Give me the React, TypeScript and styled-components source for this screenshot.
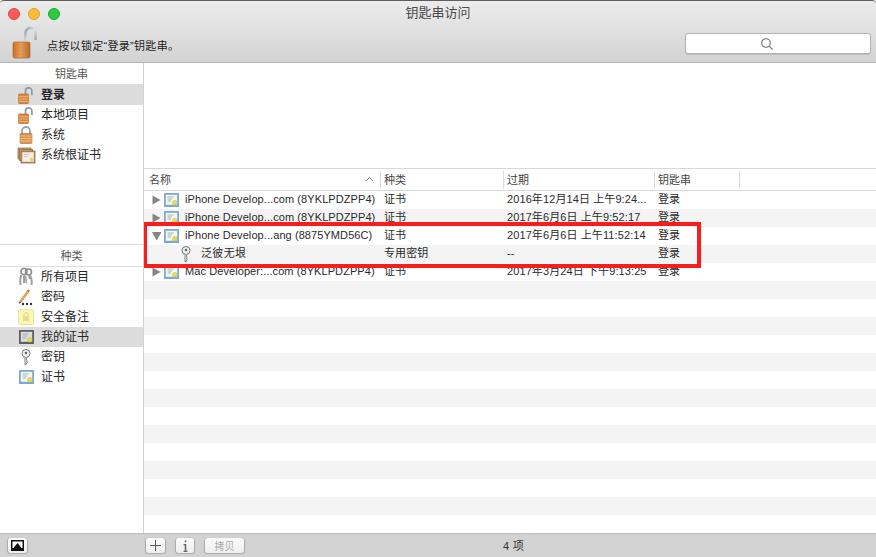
import React from "react";
import styled, { createGlobalStyle } from "styled-components";

const Global = createGlobalStyle`
  html, body { margin: 0; padding: 0; background: #fff; overflow: hidden; }
  body { font-family: "Liberation Sans", "Noto Sans CJK SC", sans-serif; }
  * { box-sizing: border-box; }
`;

const FONT = `"Liberation Sans", "Noto Sans CJK SC", sans-serif`;

const Window = styled.div`
  width: 876px; height: 557px; display: flex; flex-direction: column;
  position: relative; background: #fff; overflow: hidden; color: #222;
`;
const Chrome = styled.header`
  height: 63px; flex: none; display: flex; flex-direction: column;
  border-top: 1px solid #5e5e5e; border-bottom: 1px solid #b4b4b4;
  border-radius: 4px 4px 0 0;
  background: linear-gradient(#ececec, #d3d3d3);
`;
const TitleBar = styled.div`
  height: 25px; flex: none; display: flex; align-items: center; padding-left: 8px; gap: 8px; position: relative;
`;
const Light = styled.span<{ $c: string; $b: string }>`
  width: 12px; height: 12px; border-radius: 50%; background: ${p => p.$c}; border: 0.5px solid ${p => p.$b};
`;
const Title = styled.div`
  position: absolute; left: 0; right: 0; top: 3px; text-align: center; font-size: 13px; line-height: 18px; color: #4a4a4a;
`;
const ToolRow = styled.div`
  flex: 1; display: flex; align-items: flex-start; padding: 0 5px 0 8px; position: relative;
`;
const LockSlot = styled.div` width: 30px; height: 36px; flex: none; margin-top: -2px; `;
const Hint = styled.div`
  font-size: 11px; line-height: 14px; color: #1a1a1a; margin: 13px 0 0 9px; flex: 1; letter-spacing: 0.3px;
`;
const Search = styled.div`
  width: 186px; height: 21px; margin-top: 7px; background: #fff; border: 1px solid #b2b2b2; border-radius: 3px;
  display: flex; align-items: center; justify-content: center; padding-right: 22px;
  box-shadow: 0 1px 0 #bdbdbd;
`;
const Body = styled.div` flex: 1; display: flex; min-height: 0; `;
const Sidebar = styled.aside`
  width: 144px; flex: none; border-right: 1px solid #d2d2d2; display: flex; flex-direction: column;
`;
const Section = styled.section<{ $h: number }>`
  height: ${p => p.$h}px; flex: none; display: flex; flex-direction: column;
`;
const SideHead = styled.div<{ $line?: boolean }>`
  height: ${p => p.$line ? 23 : 22}px; flex: none; display: flex; align-items: center; justify-content: center;
  padding-bottom: 2px;
  font-size: 11px; color: #555; border-bottom: 1px solid #dcdcdc; ${p => p.$line ? "border-top: 1px solid #dcdcdc;" : ""}
`;
const SideRow = styled.div<{ $sel?: boolean }>`
  height: 20px; flex: none; display: flex; align-items: center; padding-left: 16px; gap: 5px;
  background: ${p => p.$sel ? "#dcdcdc" : "transparent"};
  color: #262626;
`;
const SideLabel = styled.span<{ $bold?: boolean }>`
  font-size: 12px; line-height: 16px; margin-bottom: 1px; font-weight: ${p => p.$bold ? 700 : 400};
`;
const IconBox = styled.span`
  width: 20px; height: 20px; flex: none; display: flex; align-items: center; justify-content: center;
`;
const Main = styled.main` flex: 1; display: flex; flex-direction: column; position: relative; min-width: 0; `;
const Blank = styled.div` height: 106px; flex: none; border-bottom: 1px solid #d8d8d8; `;
const ColumnGrid = styled.div`
  display: grid; grid-template-columns: 237px 123px 151px 85px 1fr;
`;
const HeadRow = styled(ColumnGrid)`
  height: 22px; flex: none; border-bottom: 1px solid #d8d8d8; align-items: stretch;
`;
const HeadCell = styled.div<{ $pad: number }>`
  position: relative; display: flex; align-items: center; justify-content: space-between;
  padding: 0 6px 2px ${p => p.$pad}px; font-size: 11px; color: #444; margin: 2px 0;
  &:not(:last-child) { border-right: 1px solid #dcdcdc; }
`;
const Rows = styled.div` flex: 1; overflow: hidden; `;
const Row = styled(ColumnGrid)`
  height: 18px; font-size: 11px; line-height: 16px; color: #2a2a2a;
  &:nth-child(even) { background: #f4f4f4; }
`;
const NameCell = styled.div<{ $child?: boolean }>`
  display: flex; align-items: center; padding-left: ${p => p.$child ? 36 : 8}px; min-width: 0; white-space: nowrap;
`;
const Twisty = styled.span` width: 12px; height: 18px; flex: none; display: flex; align-items: center; `;
const NameIcon = styled.span`
  width: 21px; flex: none; display: flex; align-items: center; height: 18px;
`;
const NameText = styled.span<{ $spaced?: boolean }>`
  margin-bottom: 2px;
  letter-spacing: ${p => p.$spaced ? "0.03em" : "0.08px"};
`;
const Cell = styled.div` padding-left: 3px; white-space: nowrap; overflow: hidden; letter-spacing: 0.1px; `;
const Highlight = styled.div`
  position: absolute; left: 0; top: 159px; width: 557px; height: 46px;
  border: 4.5px solid #fb1c1c; border-left-width: 3.5px; pointer-events: none;
`;
const Footer = styled.footer`
  height: 24px; flex: none; display: flex; align-items: center; background: #d2d2d2; border-top: 1px solid #bcbcbc;
`;
const FootLeft = styled.div` width: 144px; flex: none; padding-left: 8px; display: flex; align-items: center; `;
const FootMain = styled.div` flex: 1; display: grid; grid-template-columns: 1fr auto 1fr; align-items: center; `;
const FootButtons = styled.div` display: flex; gap: 11px; padding-left: 2px; align-items: center; `;
const FootButton = styled.button<{ $w: number; $off?: boolean }>`
  width: ${p => p.$w}px; height: 15px; padding: 0; border: 0; border-radius: 3px; background: linear-gradient(#fbfbfb, #eeeeee);
  box-shadow: 0 0.5px 1px 0.5px #a8a8a8; display: flex; align-items: center; justify-content: center;
  font: 10px ${FONT}; color: ${p => p.$off ? "#a8a8a8" : "#333"};
`;
const Count = styled.div` font-size: 11px; color: #333; padding: 0 0 2px 7px; letter-spacing: 0.03em; `;

const BigLock = () => (
  <svg width="30" height="36" viewBox="0 0 30 36">
    <defs>
      <linearGradient id="bigBody" x1="0" x2="1" y1="0" y2="0">
        <stop offset="0" stopColor="#c8702a" /><stop offset=".45" stopColor="#e8a25c" /><stop offset="1" stopColor="#b9692a" />
      </linearGradient>
      <linearGradient id="shk" x1="0" x2="1" y1="0" y2="1">
        <stop offset="0" stopColor="#8f9aa3" /><stop offset=".5" stopColor="#dfe4e8" /><stop offset="1" stopColor="#8d98a1" />
      </linearGradient>
    </defs>
    <path d="M17.5 19V9.5a5 5.5 0 0 1 10 0V15" fill="none" stroke="url(#shk)" strokeWidth="2.6" strokeLinecap="round" />
    <rect x="5" y="18" width="17" height="16" rx="1.5" fill="url(#bigBody)" stroke="#a8601f" strokeWidth=".6" />
    <path d="M5 21h17M5 24h17M5 27h17M5 30h17" stroke="#bf7430" strokeWidth=".5" opacity=".6" />
  </svg>
);

const SmallOpenLock = () => (
  <svg width="20" height="20" viewBox="0 0 20 20">
    <path d="M7.5 10V6a3.2 3.2 0 0 1 6.4 0V9.5" transform="translate(2 0)" fill="none" stroke="#8e99a3" strokeWidth="1.7" strokeLinecap="round" />
    <rect x="2.5" y="9" width="10" height="9.5" rx="1" fill="#d98a41" stroke="#a85f22" strokeWidth=".6" />
    <path d="M2.5 11.5h10M2.5 14h10M2.5 16.5h10" stroke="#f0b77c" strokeWidth=".8" />
  </svg>
);

const SmallClosedLock = () => (
  <svg width="20" height="20" viewBox="0 0 20 20">
    <path d="M6 9V6a4 4 0 0 1 8 0V9" fill="none" stroke="#98a1a9" strokeWidth="1.8" />
    <rect x="4" y="8.5" width="12" height="10" rx="1" fill="#dd9250" stroke="#b06a2c" strokeWidth=".6" />
    <path d="M4 11h12M4 13.5h12M4 16h12" stroke="#f2c08a" strokeWidth=".9" />
  </svg>
);

const CertStack = () => (
  <svg width="20" height="20" viewBox="0 0 20 20">
    <rect x="2" y="3" width="13" height="11" fill="#c9a071" stroke="#8d6238" strokeWidth=".7" />
    <rect x="3.5" y="4.5" width="13" height="11" fill="#d7b48a" stroke="#8d6238" strokeWidth=".7" />
    <rect x="5" y="6" width="14" height="12" fill="#c79a66" stroke="#7d5430" strokeWidth=".7" />
    <rect x="6.3" y="7.3" width="11.4" height="9.4" fill="#f6efe6" />
    <path d="M8 9.5h5M8 11.5h4" stroke="#c9b7b7" strokeWidth=".8" />
    <circle cx="15.5" cy="14.5" r="1.7" fill="#e3d25c" />
  </svg>
);

const KeyRing = () => (
  <svg width="20" height="20" viewBox="0 0 20 20" fill="none" stroke="#8d8d8d">
    <circle cx="8" cy="4.5" r="3" strokeWidth="1.6" />
    <circle cx="12.5" cy="5" r="3" strokeWidth="1.6" />
    <path d="M5.5 8C4 11 4 14 4.5 18M8 8.5V16M13 8l1 4M14 8.5c2 3 2 6 1.5 9.5" strokeWidth="2" stroke="#9d9d9d" />
    <path d="M9.5 8.5l1 8" strokeWidth="1.8" stroke="#a9a9a9" />
  </svg>
);

const Pencil = () => (
  <svg width="20" height="20" viewBox="0 0 20 20">
    <path d="M3.5 14.5L11.5 3.5l1.6 1.2L5 15.7z" fill="#e2b063" stroke="#a67b3a" strokeWidth=".5" />
    <path d="M11.3 3.7l1-1.3 1.6 1.2-.9 1.2z" fill="#d8433a" />
    <path d="M3.5 14.5l-.6 2.3 2.1-1.1z" fill="#333" />
    <circle cx="7" cy="17" r="1.2" fill="#333" /><circle cx="11" cy="17" r="1.2" fill="#333" /><circle cx="15" cy="17" r="1.2" fill="#333" />
  </svg>
);

const Note = () => (
  <svg width="20" height="20" viewBox="0 0 20 20">
    <rect x="2.5" y="2.5" width="15" height="15" rx="1" fill="#fdf7b4" stroke="#e9e2a5" />
    <path d="M8 9V7.5a2 2 0 0 1 4 0V9" fill="none" stroke="#e6dc8f" strokeWidth="1.2" />
    <rect x="7" y="9" width="6" height="5" fill="#e6dc8f" />
  </svg>
);

const Cert = ({ dark }: { dark?: boolean }) => (
  <svg width="15" height="14" viewBox="0 0 15 14">
    <rect x="0" y="0" width="15" height="14" rx=".5" fill={dark ? "#5f5f5f" : "#7ea9cf"} />
    <rect x="1.8" y="1.8" width="11.4" height="10" fill={dark ? "#dedede" : "#f4f6f3"} />
    <path d="M3.5 4h6M3.5 6h4.5M3.5 8h3.5" stroke="#9aa2a8" strokeWidth=".8" />
    <circle cx="10.8" cy="9.8" r="2.4" fill="#e4dc58" stroke="#bdb43a" strokeWidth=".4" />
  </svg>
);

const KeyIcon = () => (
  <svg width="12" height="17" viewBox="0 0 12 17" fill="none" stroke="#777">
    <circle cx="6" cy="4.5" r="4" fill="#f1f1f1" />
    <circle cx="6" cy="4" r="1.3" fill="#666" stroke="none" />
    <path d="M5 8.5v7.5l1.5-.8V14l1-.6-1-.8.8-.7-.8-.7V8.5" fill="#eee" strokeWidth=".9" />
  </svg>
);

const Tri = ({ open }: { open?: boolean }) => (
  <svg width="10" height="10" viewBox="0 0 10 10">
    <path d={open ? "M0 1h9.5L4.7 9.5z" : "M0.5 0.5L8.5 5 0.5 9.5z"} fill="#858585" />
  </svg>
);

const keychains = [
  { label: "登录", icon: <SmallOpenLock />, sel: true, bold: true },
  { label: "本地项目", icon: <SmallOpenLock /> },
  { label: "系统", icon: <SmallClosedLock /> },
  { label: "系统根证书", icon: <CertStack /> },
];
const categories = [
  { label: "所有项目", icon: <KeyRing /> },
  { label: "密码", icon: <Pencil /> },
  { label: "安全备注", icon: <Note /> },
  { label: "我的证书", icon: <Cert dark />, sel: true },
  { label: "密钥", icon: <KeyIcon /> },
  { label: "证书", icon: <Cert /> },
];
const rows = [
  { name: "iPhone Develop...com (8YKLPDZPP4)", kind: "证书", exp: "2016年12月14日 上午9:24...", chain: "登录" },
  { name: "iPhone Develop...com (8YKLPDZPP4)", kind: "证书", exp: "2017年6月6日 上午9:52:17", chain: "登录" },
  { name: "iPhone Develop...ang (8875YMD56C)", kind: "证书", exp: "2017年6月6日 上午11:52:14", chain: "登录", open: true },
  { name: "泛彼无垠", kind: "专用密钥", exp: "--", chain: "登录", child: true },
  { name: "Mac Developer:...com (8YKLPDZPP4)", kind: "证书", exp: "2017年3月24日 下午9:13:25", chain: "登录" },
];
const filler = Array.from({ length: 14 }, (_, i) => i);

export default function App() {
  return (
    <Window>
      <Global />
      <Chrome>
        <TitleBar>
          <Light $c="#fc5b57" $b="#e2463f" />
          <Light $c="#fdbb40" $b="#e1a116" />
          <Light $c="#2fc840" $b="#19ab29" />
          <Title>钥匙串访问</Title>
        </TitleBar>
        <ToolRow>
          <LockSlot><BigLock /></LockSlot>
          <Hint>点按以锁定“登录”钥匙串。</Hint>
          <Search>
            <svg width="14" height="14" viewBox="0 0 14 14" fill="none" stroke="#6e6e6e" strokeWidth="1.1">
              <circle cx="6" cy="6" r="4.3" /><path d="M9.2 9.2l3.4 3.4" />
            </svg>
          </Search>
        </ToolRow>
      </Chrome>
      <Body>
        <Sidebar>
          <Section $h={181}>
            <SideHead>钥匙串</SideHead>
            {keychains.map(k => (
              <SideRow key={k.label} $sel={k.sel}><IconBox>{k.icon}</IconBox><SideLabel $bold={k.bold}>{k.label}</SideLabel></SideRow>
            ))}
          </Section>
          <Section $h={280}>
            <SideHead $line>种类</SideHead>
            {categories.map(k => (
              <SideRow key={k.label} $sel={k.sel}><IconBox>{k.icon}</IconBox><SideLabel>{k.label}</SideLabel></SideRow>
            ))}
          </Section>
        </Sidebar>
        <Main>
          <Blank />
          <HeadRow>
            <HeadCell $pad={5}>
              名称
              <svg width="9" height="6" viewBox="0 0 9 6" fill="none" stroke="#8a8a8a" strokeWidth="1"><path d="M1 5l3.5-3.5L8 5" /></svg>
            </HeadCell>
            <HeadCell $pad={3}>种类</HeadCell>
            <HeadCell $pad={3}>过期</HeadCell>
            <HeadCell $pad={3}>钥匙串</HeadCell>
            <HeadCell $pad={0} />
          </HeadRow>
          <Rows>
            {rows.map((r, i) => (
              <Row key={i}>
                <NameCell $child={r.child}>
                  {!r.child && <Twisty><Tri open={r.open} /></Twisty>}
                  <NameIcon>{r.child ? <KeyIcon /> : <Cert />}</NameIcon>
                  <NameText $spaced={r.child}>{r.name}</NameText>
                </NameCell>
                <Cell>{r.kind}</Cell>
                <Cell>{r.exp}</Cell>
                <Cell>{r.chain}</Cell>
              </Row>
            ))}
            {filler.map(i => <Row key={`f${i}`} />)}
          </Rows>
          <Highlight />
        </Main>
      </Body>
      <Footer>
        <FootLeft>
          <FootButton $w={19}>
            <svg width="13" height="11" viewBox="0 0 13 11">
              <rect width="13" height="11" fill="#111" />
              <rect x="1.5" y="1.5" width="10" height="6.5" fill="#fff" />
              <path d="M2.5 8L6.5 3l4 5z" fill="#111" />
            </svg>
          </FootButton>
        </FootLeft>
        <FootMain>
          <FootButtons>
            <FootButton $w={19}>
              <svg width="11" height="11" viewBox="0 0 11 11" stroke="#555" strokeWidth="1"><path d="M5.5 0v11M0 5.5h11" /></svg>
            </FootButton>
            <FootButton $w={18}>
              <svg width="7" height="12" viewBox="0 0 7 12" fill="#666"><rect x="2.7" y="0.5" width="1.6" height="1.8" /><path d="M1.5 4h2.8v6.8H5.5V12H1.5v-1.2h1.2V5.2H1.5z" /></svg>
            </FootButton>
            <FootButton $w={39} $off>拷贝</FootButton>
          </FootButtons>
          <Count>4 项</Count>
          <span />
        </FootMain>
      </Footer>
    </Window>
  );
}
